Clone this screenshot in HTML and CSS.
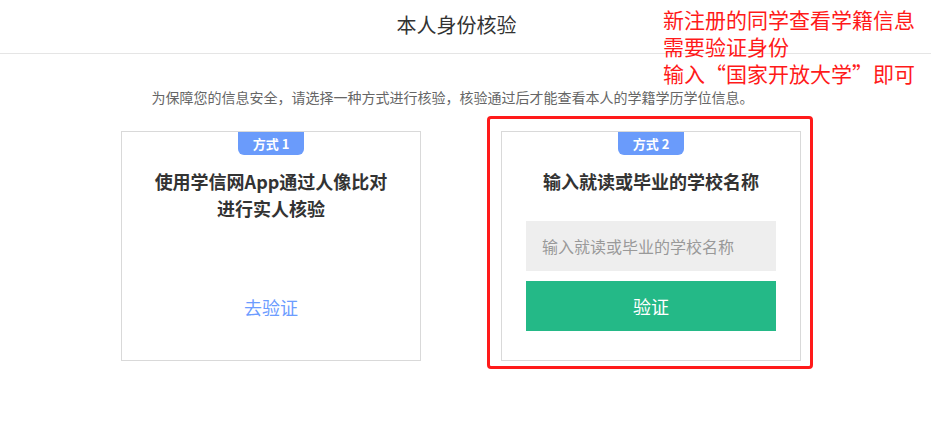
FILE: index.html
```html
<!DOCTYPE html>
<html lang="zh-CN">
<head>
	<meta charset="UTF-8">
	<title>本人身份核验</title>
	<link rel="stylesheet" href="styles.css">
</head>
<body>
	<div class="header">
		<h1 class="title">本人身份核验</h1>
	</div>
	<p class="tip">为保障您的信息安全，请选择一种方式进行核验，核验通过后才能查看本人的学籍学历学位信息。</p>
	<div class="cards">
		<div class="card">
			<span class="badge">方式 1</span>
			<h2 class="card_title">使用学信网App通过人像比对<br>进行实人核验</h2>
			<a class="go_link" href="#">去验证</a>
		</div>
		<div class="mark_box">
			<div class="card">
				<span class="badge">方式 2</span>
				<h2 class="card_title">输入就读或毕业的学校名称</h2>
				<input class="school_input" type="text" placeholder="输入就读或毕业的学校名称">
				<button class="verify_btn">验证</button>
			</div>
		</div>
	</div>
	<div class="note">新注册的同学查看学籍信息<br>需要验证身份<br>输入“国家开放大学”即可</div>
</body>
</html>
```

FILE: styles.css
```css
	body{
		margin: 0;
		font-family: "Microsoft YaHei", "Noto Sans CJK SC", "Noto Sans", sans-serif;
		color: #333;
		background: #fff;
	}
	.header{
		height: 53px;
		border-bottom: 1px solid #e5e5e5;
	}
	.title{
		margin: 0;
		padding-right: 18px;
		line-height: 50px;
		font-size: 20px;
		font-weight: normal;
		text-align: center;
		color: #333;
	}
	.tip{
		margin: 35px 0 0;
		padding-right: 26px;
		font-size: 14px;
		line-height: 16px;
		color: #666;
		text-align: center;
	}
	.cards{
		display: flex;
		align-items: flex-start;
		gap: 80px;
		margin: 26px 0 0 121px;
	}
	.card{
		display: flex;
		flex-direction: column;
		align-items: center;
		width: 298px;
		height: 228px;
		border: 1px solid #d9d9d9;
	}
	.badge{
		width: 66px;
		height: 23px;
		line-height: 23px;
		border-radius: 0 0 6px 6px;
		background: #6a9bfb;
		color: #fff;
		font-size: 13px;
		font-weight: bold;
		text-align: center;
	}
	.card_title{
		margin: 13px 0 0;
		font-size: 18px;
		line-height: 27px;
		font-weight: bold;
		text-align: center;
		color: #333;
	}
	.go_link{
		margin-top: 72px;
		font-size: 18px;
		color: #6c9cff;
		text-decoration: none;
	}
	.school_input{
		box-sizing: border-box;
		width: 250px;
		height: 50px;
		margin-top: 26px;
		padding: 0 16px;
		border: none;
		background: #eee;
		font-family: inherit;
		font-size: 16px;
		outline: none;
	}
	.school_input::placeholder{
		color: #999;
	}
	.verify_btn{
		width: 250px;
		height: 50px;
		margin-top: 10px;
		border: none;
		background: #24b987;
		color: #fff;
		font-family: inherit;
		font-size: 18px;
	}
	.mark_box{
		margin: -15px 0 0 -14px;
		padding: 12px 9px 5px 11px;
		border: 3px solid #ff1a1a;
		border-radius: 4px;
	}
	.note{
		position: absolute;
		top: 6px;
		left: 663px;
		font-size: 21px;
		line-height: 27px;
		color: #ff1a1a;
	}
```
